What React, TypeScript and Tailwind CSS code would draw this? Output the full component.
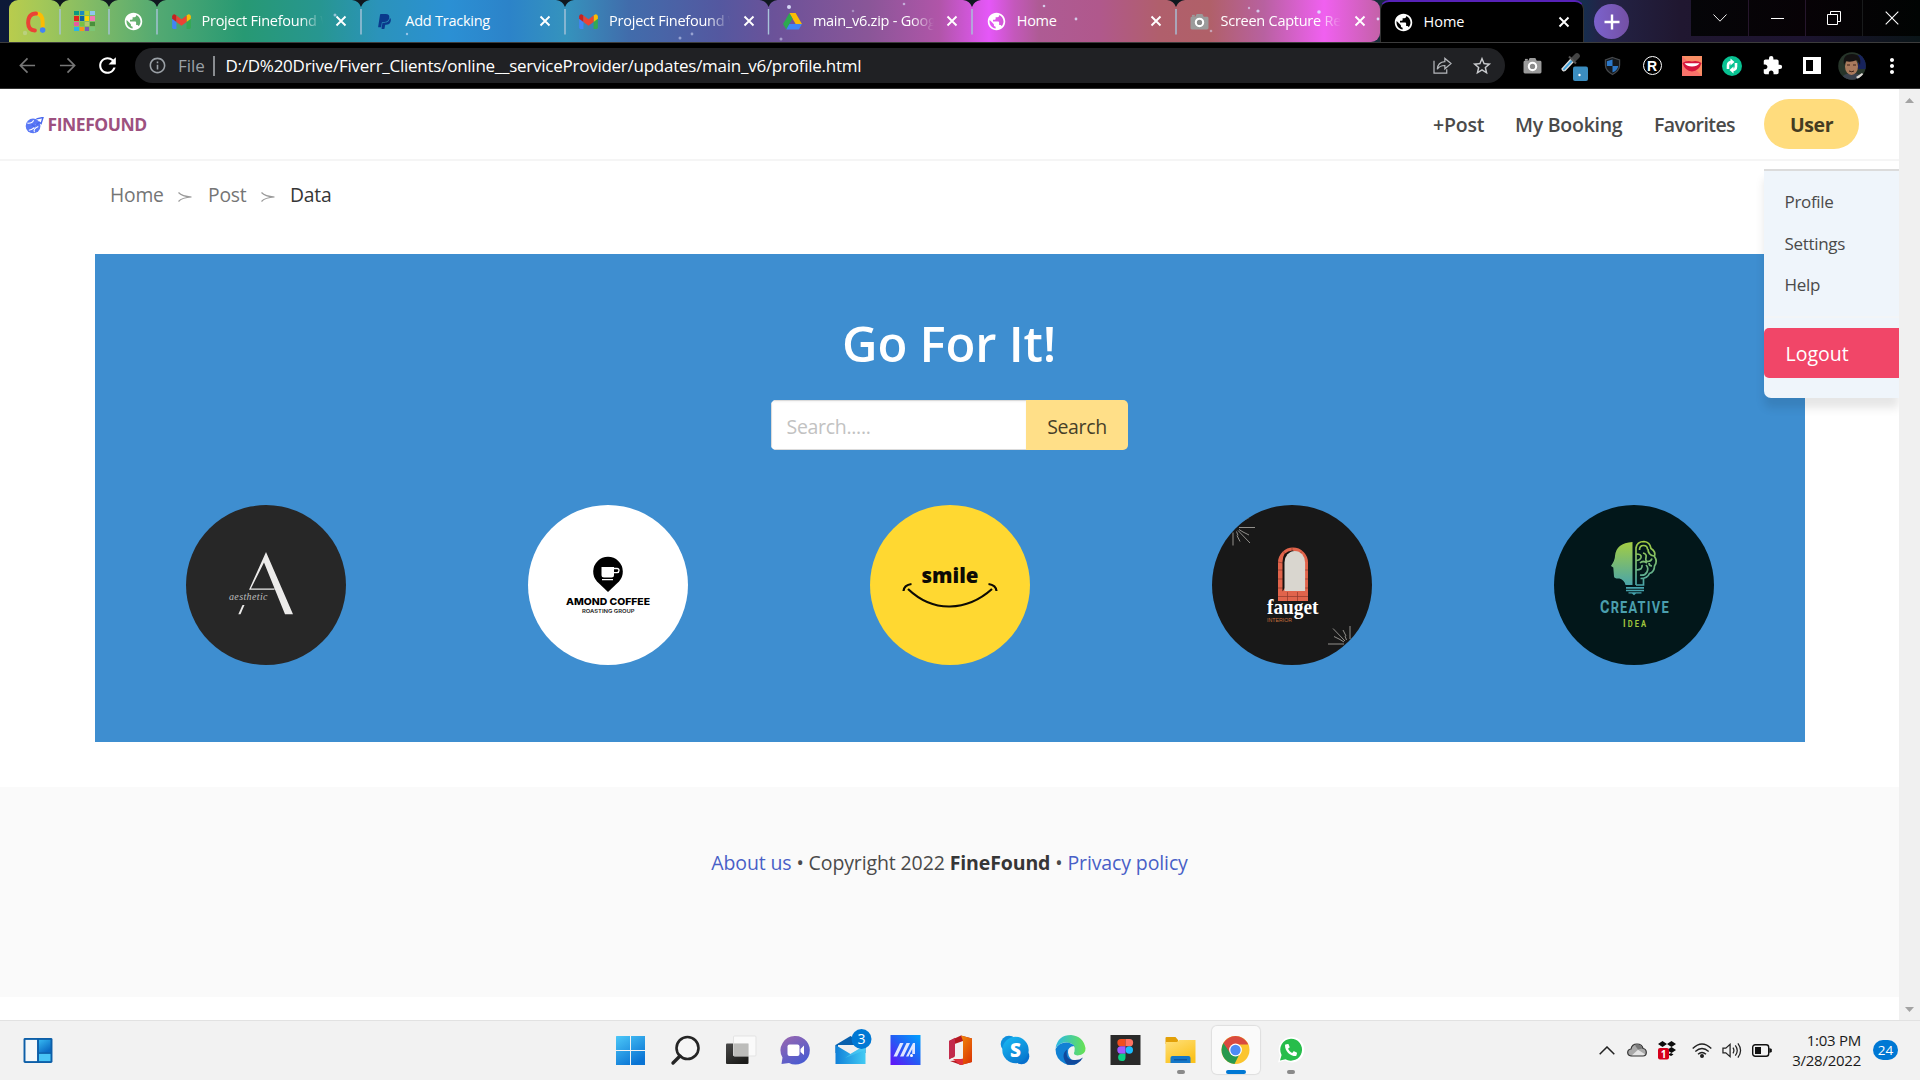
import React from "react";
import { MdPublic, MdExtension, MdOutlineInfo, MdMoreVert, MdStarBorder, MdRefresh } from "react-icons/md";
import { FaPaypal, FaPhone } from "react-icons/fa";

type IconProps = { className?: string };

/* ---------- favicons ---------- */

const Gmail = ({ className = "" }: IconProps) => (
  <svg viewBox="0 0 20 16" className={`h-[15px] w-[19px] ${className}`}>
    <path d="M0 3v11.500Q0 16 1.500 16H4.600V6z" fill="#4285f4" />
    <path d="M20 3v11.500Q20 16 18.500 16h-3.100V6z" fill="#34a853" />
    <path d="M0 2.500Q.5 0 3 .4L4.600 1.500V8.500L0 5z" fill="#c5221f" />
    <path d="M20 2.500Q19.500 0 17 .4L15.400 1.500V8.500L20 5z" fill="#fbbc04" />
    <path d="M4.600 1.500L10 5.600 15.400 1.500v7L10 12.600 4.600 8.500z" fill="#ea4335" />
  </svg>
);

const Drive = () => (
  <svg viewBox="0 0 20 18" className="h-[17px] w-[19px]">
    <path d="M6.700 0h6.600L20 11.700h-6.700z" fill="#fbbc04" />
    <path d="M6.700 0L10 5.800 3.400 17.500 0 11.700z" fill="#2da94f" />
    <path d="M6.700 11.700H20l-3.300 5.900H3.400z" fill="#4285f4" />
  </svg>
);

const Camera = () => (
  <svg viewBox="0 0 20 18" className="h-[17px] w-[19px]">
    <path d="M2 4H5.500L7 1h6l1.500 3H18q1.500 0 1.500 1.500V16q0 1.500-1.500 1.500H2Q.5 17.500.5 16V5.500Q.5 4 2 4z" fill="#9b9b9b" />
    <rect x="2" y="2" width="3" height="2" fill="#9b9b9b" />
    <circle cx="10" cy="10" r="3.900" fill="#8a8a8a" stroke="#fff" strokeWidth="2.200" />
  </svg>
);

const AdsRing = () => (
  <svg viewBox="0 0 22 24" className="h-[24px] w-[21px]">
    <path d="M11.500 3.200q7 0 7 9v5" fill="none" stroke="#fbbc04" strokeWidth="4.200" strokeLinecap="round" />
    <path d="M11.500 3.200Q3.500 3 3.300 13q.2 7.500 7 7.800" fill="none" stroke="#ea4335" strokeWidth="4.200" strokeLinecap="round" />
    <circle cx="18.500" cy="20.500" r="2.900" fill="#4285f4" />
  </svg>
);

const swatches = [
  "#0a9b80", "#1a8ac0", "#b2d235", "#8fc7ee",
  "#e2231a", "#0b5fa5", "#ffd500", "#f277b0",
  "#e85aa0", "#7ac143", "#b5c96a", "#4a8f3c",
  "#29b6e8", "#f7941d", "#7a5ab5", "#7cc576",
];
const SwatchGrid = () => (
  <div className="grid grid-cols-4 gap-px">
    {swatches.map((c, i) => (
      <span key={i} className="size-[4.300px]" style={{ background: c }} />
    ))}
  </div>
);

const Cross = ({ className = "" }: IconProps) => (
  <svg viewBox="0 0 12 12" className={`size-[12px] ${className}`}>
    <path d="M1.500 1.500l9 9M10.500 1.500l-9 9" stroke="#fff" strokeWidth="1.900" />
  </svg>
);

/* ---------- browser chrome ---------- */

const tabs: { icon: React.ReactNode; title: string; fade?: boolean }[] = [
  { icon: <Gmail />, title: "Project Finefound W", fade: true },
  { icon: <FaPaypal className="size-[17px] text-[#0a3a8c]" />, title: "Add Tracking" },
  { icon: <Gmail />, title: "Project Finefound W", fade: true },
  { icon: <Drive />, title: "main_v6.zip - Google", fade: true },
  { icon: <MdPublic className="size-[21px] text-white" />, title: "Home" },
  { icon: <Camera />, title: "Screen Capture Res", fade: true },
];

const Stars = () => (
  <svg viewBox="0 0 1380 42" className="pointer-events-none absolute left-0 top-0 h-[42px] w-[1380px]">
    {[[789, 7, 2, 0.9], [904, 4, 1.300, 0.6], [853, 11, 1.300, 0.4], [680, 38, 1.500, 0.5], [692, 34, 1.400, 0.5], [781, 39, 1.500, 0.5], [1044, 6, 1.300, 0.8], [1076, 19, 1.400, 0.8], [1258, 11, 1.600, 0.8], [1319, 12, 1.800, 0.9], [1249, 8, 1.200, 0.6], [1378, 19, 1.400, 0.9], [335, 15, 1.500, 0.6], [407, 34, 1.200, 0.6], [25, 33, 2.200, 0.25], [1211, 31, 1.300, 0.5]].map(([x, y, r, o], i) => (
      <circle key={i} cx={x} cy={y} r={r} fill="#dfe6ff" opacity={o} />
    ))}
  </svg>
);

const TabStrip = () => (
  <div className="relative flex h-[42px] bg-[linear-gradient(90deg,#0d1a38_0,#0f1826_380px,#101a20_800px,#1f0f38_980px,#182826_1180px,#14304f_1580px,#232448_1600px,#201730_1680px,#1d1430_1800px,#0a1518_1920px)]">
    <div className="flex w-[1380px] pl-[9px]">
      <div className="relative flex w-[1371px] rounded-t-[9px] rounded-br-[9px] bg-[linear-gradient(90deg,#b9cc4d_0,#a5c857_30px,#80ba66_85px,#52a972_150px,#279973_235px,#279690_310px,#2b93bb_370px,#2b90d4_440px,#2c83c9_500px,#3593bd_557px,#416cab_620px,#5458a0_710px,#6b5299_765px,#8a5698_860px,#b055a8_930px,#e557f8_980px,#c458bc_1005px,#ae5b94_1030px,#b0588c_1090px,#b05f6c_1150px,#b06068_1200px,#b861a0_1255px,#f060f0_1315px,#c461a8_1371px)]">
        <div className="flex w-[51px] items-center justify-center pl-px pt-px"><AdsRing /></div>
        <div className="flex w-[49px] items-center justify-center border-l border-transparent pr-px"><SwatchGrid /></div>
        <div className="flex w-[48px] items-center justify-center"><MdPublic className="size-[21px] text-white" /></div>
        {tabs.map((t, i) => (
          <div key={i} className="flex w-[203.800px] items-center">
            <span className="ml-[13px] flex w-[22px] justify-center">{t.icon}</span>
            <span className={`ml-[9.500px] w-[121.500px] overflow-hidden whitespace-nowrap text-[14.500px] leading-5 tracking-[-0.250px] text-white ${t.fade ? "[mask-image:linear-gradient(90deg,#000_98px,transparent_121px)]" : ""}`}>{t.title}</span>
            <Cross className="ml-[12px]" />
          </div>
        ))}
      </div>
    </div>
    <svg viewBox="0 0 1200 42" className="pointer-events-none absolute left-0 top-0 h-[42px] w-[1200px]">
      {[60, 109, 157, 361, 565, 768.500, 972, 1176].map((x) => (
        <g key={x}>
          <path d={`M${x - 9} 0h18q-7 1-9 7q-2-6-9-7z`} fill="#10181f" />
          <path d={`M${x} 9v25.500`} stroke="#a8c4da" strokeWidth="1.400" />
        </g>
      ))}
    </svg>
    <Stars />
    <div className="flex w-[204px] items-center rounded-t-[9px] border-x border-t-2 border-x-[#333] border-t-[#5722b8] bg-black">
      <MdPublic className="ml-[12px] size-[21px] text-white" />
      <span className="ml-[9.500px] w-[121.500px] pb-px text-[14.500px] leading-5 text-white">Home</span>
      <Cross className="ml-[12.500px]" />
    </div>
    <div className="ml-[10px] mt-1 flex size-[35px] items-center justify-center rounded-full bg-[linear-gradient(90deg,#7b62cc,#7450a5)]">
      <svg viewBox="0 0 16 16" className="size-[16px]"><path d="M8 .5v15M.5 8h15" stroke="#fff" strokeWidth="2.400" /></svg>
    </div>
    <div className="ml-auto flex h-[36px] w-[229px] bg-[linear-gradient(90deg,#050508,#070206_50%,#010403)]">
      <div className="flex w-[58px] items-center justify-center border-r border-[#26162c]">
        <svg viewBox="0 0 14 8" className="h-[8px] w-[14px]"><path d="M.5.5L7 7.200 13.500.5" fill="none" stroke="#eee" /></svg>
      </div>
      <div className="flex w-[57px] items-center justify-center border-r border-[#26162c]"><span className="h-px w-[13px] bg-white" /></div>
      <div className="flex w-[57px] items-center justify-center border-r border-[#191b1c]">
        <svg viewBox="0 0 14 14" className="size-[14px]" fill="none" stroke="#fff"><path d="M.5 3.500h10v10H.5zM3.500 3.500V.5h10v10h-3" /></svg>
      </div>
      <div className="flex w-[57px] items-center justify-center">
        <svg viewBox="0 0 14 14" className="size-[14px]"><path d="M.7.7l12.600 12.600M13.300.7L.7 13.300" stroke="#fff" strokeWidth="1.100" /></svg>
      </div>
    </div>
  </div>
);

const Slot = ({ children }: { children: React.ReactNode }) => (
  <span className="relative flex w-10 items-center justify-center">{children}</span>
);

const Toolbar = () => (
  <div className="flex h-[47px] items-center border-t border-[#3c3c3c] bg-black pb-px shadow-[inset_0_-1px_0_#333]">
    <span className="ml-[7px] flex w-10 justify-center">
      <svg viewBox="0 0 18 18" className="size-[17px]" fill="none" stroke="#777" strokeWidth="1.800"><path d="M17 9H2M9 1.500L1.500 9 9 16.500" /></svg>
    </span>
    <span className="flex w-10 justify-center">
      <svg viewBox="0 0 18 18" className="size-[17px]" fill="none" stroke="#777" strokeWidth="1.800"><path d="M1 9h15M9 1.500L16.500 9 9 16.500" /></svg>
    </span>
    <span className="flex w-10 justify-center"><MdRefresh className="size-[25px] text-white" /></span>
    <div className="ml-[8px] flex h-[35px] w-[1370px] items-center rounded-full bg-[#202124] text-[17px] leading-6">
      <MdOutlineInfo className="ml-[13px] size-[19px] text-[#9aa0a6]" />
      <span className="ml-[11px] w-[35px] text-[17px] text-[#9aa0a6]">File</span>
      <span className="h-[20px] w-[1.500px] bg-[#8a8d91]" />
      <span className="ml-[11px] whitespace-nowrap text-[17px] tracking-[-0.255px] text-white">D:/D%20Drive/Fiverr_Clients/online__serviceProvider/updates/main_v6/profile.html</span>
      <svg viewBox="0 0 20 18" className="ml-auto mr-[19px] h-[17px] w-[19px]" fill="none" stroke="#b5b8bc" strokeWidth="1.300">
        <path d="M1 4v13h13.500v-4M4.500 13Q5 5.500 12.500 5V1.500L19 7l-6.500 5.500V9Q7 9 4.500 13z" />
      </svg>
      <MdStarBorder className="mr-[12px] size-[22px] text-[#c8cacd]" />
    </div>
    <div className="ml-[7px] flex h-full items-center">
      <Slot><Camera /></Slot>
      <Slot>
        <svg viewBox="0 0 32 30" className="ml-[4px] mt-[3px] h-[30px] w-[32px] shrink-0">
          <path d="M4 17L13 7l2.500 2.500L7 18.500q-2 1-3-1.500z" fill="#43a5df" stroke="#ddd" strokeWidth="1.300" />
          <path d="M13 6l4-4q2-2 4 0t0 4l-4 4z" fill="#444" /><path d="M11 4.500l7 7" stroke="#555" strokeWidth="2" />
          <rect x="15" y="14.500" width="15" height="14.500" rx="2" fill="#3b8dc0" /><circle cx="21.500" cy="23" r="1.200" fill="#fff" />
        </svg>
      </Slot>
      <Slot>
        <svg viewBox="0 0 18 20" className="h-[20px] w-[17px]">
          <path d="M9 1l7.500 2.500V9q0 6-7.500 10Q1.500 15 1.500 9V3.500z" fill="#15181c" stroke="#46494d" strokeWidth="1.300" />
          <path d="M9 3v7H3V5zM9 10h6q0 4-6 7z" fill="#2c78c9" />
        </svg>
      </Slot>
      <Slot><span className="flex size-[19px] items-center justify-center rounded-full border-[1.500px] border-white font-['Liberation_Sans'] text-[14px] font-bold leading-none text-white">R</span></Slot>
      <Slot>
        <svg viewBox="0 0 20 20" className="size-[20px]">
          <rect width="20" height="20" fill="#f9726a" />
          <path d="M0 0h20v20z" fill="#f9a263" opacity=".6" />
          <path d="M.5 7Q5 4 10 5.500 15 4 19.500 7 17 15 10 15.500 3 15 .5 7z" fill="#d5153c" /><path d="M2.500 7.200h15Q15 10.500 10 10.500T2.500 7.200z" fill="#fff" />
        </svg>
      </Slot>
      <Slot>
        <svg viewBox="0 0 20 20" className="size-[20px]">
          <circle cx="10" cy="10" r="10" fill="#08c292" />
          <g fill="none" stroke="#fff" strokeWidth="2.600"><path d="M6 13V9.500Q6 6 9.500 6M14 7v3.500Q14 14 10.500 14" /></g>
          <path d="M8.500 2.500l4 3.500-4 3.500zM11.500 17.500l-4-3.500 4-3.500z" fill="#fff" />
        </svg>
      </Slot>
      <Slot><MdExtension className="size-[21px] text-white" /></Slot>
      <Slot><span className="h-[17px] w-[18px] border-[3px] border-r-[8px] border-[#fff]" /></Slot>
      <Slot>
        <svg viewBox="0 0 28 28" className="size-[28px]">
          <defs><clipPath id="avatar"><circle cx="14" cy="14" r="13.800" /></clipPath></defs>
          <g clipPath="url(#avatar)">
            <rect width="28" height="28" fill="#27352a" /><path d="M20 3h8v14h-8z" fill="#17235c" />
            <path d="M2 28q3-7 12-7t13 7z" fill="#39404c" /><path d="M18 25l6-4 3 3-6 4z" fill="#dcd8d4" />
            <ellipse cx="13.500" cy="14.500" rx="6.500" ry="8.500" fill="#a97a5d" />
            <path d="M6 13Q4 2 14 2t8 11l-3-5q-7 3-11 1z" fill="#141212" />
            <path d="M9 13h3M15 13h3M11 19q3 1.500 5 0" stroke="#3b2119" fill="none" />
          </g>
        </svg>
      </Slot>
      <Slot><MdMoreVert className="size-[24px] text-white" /></Slot>
    </div>
  </div>
);

/* ---------- page ---------- */

const BrandGlobe = () => (
  <svg viewBox="0 0 20 18" className="h-[17px] w-[19px]">
    <circle cx="8.500" cy="9.500" r="7.800" fill="#5a78f5" />
    <path d="M2.500 6.500q5 .5 6.500-3M4 14q6-1 8-6M10 16q-2-3 4-6" stroke="#fff" strokeWidth="1.100" fill="none" />
    <path d="M12 2l7-1.500-2 6.500-2-1.500-5 5-3-2.500" fill="none" stroke="#4868ee" strokeWidth="1.500" />
  </svg>
);

const UserMenu = () => (
  <div className="absolute right-0 top-[80px] z-10 flex h-[229px] w-[135px] flex-col rounded-bl-[7px] border-t-2 border-[#dbdbdb] bg-[#eff5fb] shadow-[0_10px_10px_rgba(10,10,10,0.1)]">
    <div className="flex flex-col pl-[20.500px] pt-[10px] text-[17px] leading-[42px] tracking-[-0.320px] text-[#4a4a4a]">
      <span className="h-[41.500px]">Profile</span>
      <span className="h-[41.500px]">Settings</span>
      <span className="h-[41.500px]">Help</span>
    </div>
    <div className="mt-[10px] h-[2px] bg-[#f3f5f7]" />
    <div className="mt-[10px] flex h-[50px] items-center rounded-l-[5px] bg-[#f14668] pl-[21.500px] pt-[2px] text-[19.500px] text-white">Logout</div>
  </div>
);

const Header = () => (
  <header className="relative flex h-[72px] items-start border-b-[2px] border-[#f5f5f5] bg-white">
    <div className="ml-[25px] mt-[27px] flex items-center">
      <BrandGlobe />
      <span className="ml-[3.500px] pb-px font-['Open_Sans'] text-[17.500px] font-bold leading-[17px] tracking-[-0.450px] text-[#9d5180]">FINEFOUND</span>
    </div>
    <nav className="ml-auto mr-[40px] mt-[10px] flex h-[50px] items-center whitespace-nowrap text-[19.500px] font-semibold tracking-[-0.400px] text-[#4a4a4a]">
      <span className="w-[82px] pt-[2px] tracking-[-0.200px]">+Post</span>
      <span className="w-[139px] pt-[2px] tracking-[-0.250px]">My Booking</span>
      <span className="w-[110px] pt-[2px] tracking-[-0.600px]">Favorites</span>
      <span className="flex h-[50px] w-[95px] items-center justify-center rounded-full bg-[#ffdc7d] pt-[2px] font-bold text-[#453c22]">User</span>
    </nav>
    <UserMenu />
  </header>
);

const Separator = () => (
  <svg viewBox="0 0 14 10" className="mt-[10px] h-[10px] w-[14px]" fill="none" stroke="#9a9a9a" strokeWidth="1.200">
    <path d="M.5.5Q4 4.500 13.500 5 4 5.500.5 9.500" />
  </svg>
);

const Breadcrumb = () => (
  <div className="flex h-[93px] items-start pl-[110px] pt-[21px] text-[19.300px] leading-[26px] tracking-[-0.220px] text-[#757575]">
    <span className="w-[68px]">Home</span>
    <span className="w-[30px]"><Separator /></span>
    <span className="w-[53px]">Post</span>
    <span className="w-[29px]"><Separator /></span>
    <span className="text-[#363636]">Data</span>
  </div>
);

const Aesthetic = () => (
  <svg viewBox="0 0 160 160" className="size-40 rounded-full bg-[#272727]">
    <path d="M80 47l27 62.200h-8L78 57.500 65 83.500h23.500v1.300H63z" fill="#ecebea" />
    <path d="M56.500 100h2l-4 9.200h-2.200z" fill="#ecebea" />
    <text x="43" y="95" fontFamily="Liberation Serif" fontStyle="italic" fontSize="10" textLength="38.500" fill="#bdbdbd">aesthetic</text>
  </svg>
);
const Coffee = () => (
  <svg viewBox="0 0 160 160" className="size-40 rounded-full bg-white">
    <path d="M80 87L69 76.500A14.800 14.800 0 1 1 91 76.500z" fill="#000" />
    <path d="M73.500 62H86v8q0 2.500-2.500 2.500H76q-2.500 0-2.500-2.500zM74 74h11v1.300H74z" fill="#fff" />
    <path d="M86 63.500h3q2 0 2 2t-2 2.200h-3" fill="none" stroke="#fff" strokeWidth="1.300" />
    <text x="38" y="100" fontFamily="Inter" fontWeight="800" fontSize="9.500" textLength="84" lengthAdjust="spacingAndGlyphs" fill="#000">AMOND COFFEE</text>
    <text x="54" y="108" fontFamily="Inter" fontWeight="600" fontSize="5.300" textLength="52.500" lengthAdjust="spacingAndGlyphs" fill="#222">ROASTING GROUP</text>
  </svg>
);
const Smile = () => (
  <svg viewBox="0 0 160 160" className="size-40 rounded-full bg-[#ffd831]">
    <text x="51.500" y="77.500" fontFamily="Open Sans" fontWeight="800" fontSize="21.500" textLength="57" lengthAdjust="spacingAndGlyphs" fill="#0d0b05">smile</text>
    <g fill="none" stroke="#0d0b05" strokeWidth="2.200"><path d="M38 84Q57 102 80 101.500T122 84" /><path d="M33.500 86q.5-6 8-7M118.500 79q7.500 1 8 7" /></g>
  </svg>
);
const Burst = () => (
  <g stroke="#a09e9a" strokeWidth=".9">
    <path d="M4 0H20M3 3L15 15.500M-2 5V18M8 4.500L14 7.500M2 8L5 14M3-4L14-10M-4 2l-9 12M1.500 4L3 8M4 2L8 4.500" />
  </g>
);
const Fauget = () => (
  <svg viewBox="0 0 160 160" className="size-40 rounded-full bg-[#181818]">
    <g transform="translate(23 22.500)"><Burst /></g>
    <g transform="translate(136 139) rotate(180)"><Burst /></g>
    <path d="M66 96V57.500a15 15 0 0 1 30 0V96z" fill="#e1644b" />
    <path d="M66 65h30M66 74h30M66 83h30M66 91.500h30M75.500 87v9M85.500 87v9M66 57l5 1M80 42.500v5M71 46.500l4 4M90 46.500l-4 4" stroke="#8f3a2c" strokeWidth=".7" />
    <path d="M70.500 86.500V57q0-11 10-11.500 8 1 9 12z" fill="#17110f" />
    <path d="M72.500 86V57.500a10.300 11.500 0 0 1 20.600 0V86z" fill="#d9d6cf" />
    <text x="55" y="109" fontFamily="Liberation Serif" fontWeight="bold" fontSize="21" textLength="51.500" lengthAdjust="spacingAndGlyphs" fill="#fff">fauget</text>
    <text x="55" y="116.500" fontFamily="Liberation Sans" fontSize="6" textLength="25" lengthAdjust="spacingAndGlyphs" fill="#c8703c">INTERIOR</text>
  </svg>
);
const Creative = () => (
  <svg viewBox="0 0 160 160" className="size-40 rounded-full bg-[#02171a]">
    <defs><linearGradient id="idea" gradientUnits="userSpaceOnUse" x1="0" y1="36" x2="0" y2="82"><stop offset="0" stopColor="#a5ce40" /><stop offset="1" stopColor="#46a3ad" /></linearGradient></defs>
    <path d="M78.500 37v43h-7q-1-5-6-6.500-5 .5-5.500-2l-.7-9-2.300-1.500q4-6 4-10Q62 38 78.500 37z" fill="url(#idea)" />
    <g fill="none" stroke="url(#idea)" strokeWidth="1.700">
      <path d="M82 80V43q1-6.500 8-6.500 6 .5 7 7 5 3 3.500 8 3.500 5 0 9.500 0 6-5 7.500-2 5-9 5M89.500 74v6H82" />
      <path d="M85.500 45q0-4.500 4-4.500t4 4M82 49q6 0 5 3.500-1 3-5 3M89 48q4 1 3 4.500-1 4 2 4t4-3M82 65q7 0 6-5M92 60q3 3 1 7-2 4-7 3M94 44q0 6 6 7M98 61q-3 0-3-3M86 58q3-3 7 0" />
    </g>
    <path d="M72 82h18v1.700H72zM72 84.800h18v1.400H72zM74.500 87.300h13v1.300H82l-2 1.700-2-1.700h-3.500z" fill="#46a3ad" />
    <text transform="translate(46 108) scale(.78 1)" fontFamily="Roboto" fontWeight="700" fill="#4b9fae" textLength="88"><tspan fontSize="18.500">C</tspan><tspan fontSize="16.500">REATIVE</tspan></text>
    <text transform="translate(69 122) scale(.8 1)" fontFamily="Roboto" fontWeight="700" fill="#a0c63d" textLength="29"><tspan fontSize="11">I</tspan><tspan fontSize="9.500">DEA</tspan></text>
  </svg>
);

const Hero = () => (
  <section className="ml-[95px] h-[488px] w-[1710px] bg-[#3e8ed0] pt-[59px]">
    <h1 className="pr-[2px] text-center text-[49px] font-semibold leading-[60px] tracking-[-0.200px] text-white">Go For It!</h1>
    <div className="ml-[676px] mt-[27px] flex h-[50px] w-[357px] overflow-hidden rounded-[5px] text-[19.500px]">
      <span className="flex w-[255px] items-center border border-r-0 border-[#dbdbdb] bg-white pl-[14.500px] pt-[4px] tracking-[-0.300px] text-[#c2c2c2] shadow-[inset_0_1px_2px_rgba(10,10,10,0.05)]">Search.....</span>
      <span className="flex w-[102px] items-center justify-center bg-[#ffdf88] pt-[3px] tracking-[-0.350px] text-[#473f28]">Search</span>
    </div>
    <div className="mt-[55px] grid grid-cols-5 justify-items-center">
      <Aesthetic /><Coffee /><Smile /><Fauget /><Creative />
    </div>
  </section>
);

const Footer = () => (
  <footer className="mt-[45px] flex h-[210px] items-start justify-center bg-[#fafafa] pt-[62px] text-[19.500px] leading-[28px] text-[#4a4a4a]">
    <p className="whitespace-nowrap tracking-[-0.120px]">
      <a className="text-[#485fc7]">About us</a> • Copyright 2022 <strong className="font-bold text-[#363636]">FineFound</strong> • <a className="text-[#485fc7]">Privacy policy</a>
    </p>
  </footer>
);

const Scrollbar = () => (
  <div className="flex w-[21px] flex-col items-center justify-between bg-[#f0f0f0] pb-[8px] pt-[9px]">
    <svg viewBox="0 0 9 5" className="h-[5px] w-[9px]"><path d="M0 5L4.500 0 9 5z" fill="#a3a3a3" /></svg>
    <svg viewBox="0 0 9 5" className="h-[5px] w-[9px]"><path d="M0 0h9L4.500 5z" fill="#a3a3a3" /></svg>
  </div>
);

/* ---------- taskbar ---------- */

const grad = (id: string, a: string, b: string, horizontal = false) => (
  <linearGradient id={id} x1="0" y1="0" x2={horizontal ? "1" : "0.600"} y2={horizontal ? "0" : "1"}>
    <stop offset="0" stopColor={a} /><stop offset="1" stopColor={b} />
  </linearGradient>
);

const taskIcons: React.ReactNode[] = [
  <><defs>{grad("win", "#4cc8f8", "#0a74d4")}</defs><path d="M1.500 1h13.500v14h-14V1.500zM16 1h14v14H16zM1 16h14v14H1zM16 16h14v14H16z" fill="url(#win)" /></>,
  <><circle cx="17.500" cy="13" r="11" fill="#f5f5f5" stroke="#252525" strokeWidth="2.600" /><path d="M10 21L3 28" stroke="#252525" strokeWidth="3.400" strokeLinecap="round" /></>,
  <><defs>{grad("tv", "#4a4a4a", "#1c1c1a")}</defs><rect x="1" y="8.500" width="22.500" height="20.500" rx="1" fill="url(#tv)" /><rect x="8.500" y="1" width="22.500" height="20" rx="1" fill="#fbfbfb" fillOpacity=".9" stroke="#e3e3e3" /><rect x="8.500" y="8.500" width="15" height="12.500" fill="#bcbcba" /></>,
  <><defs>{grad("chat", "#9d68ae", "#4b5bd0")}</defs><path d="M15.500 1A14.300 14.300 0 1 1 9 28L1.500 29l1-6.500A14.300 14.300 0 0 1 15.500 1z" fill="url(#chat)" /><rect x="7.500" y="9.500" width="12" height="11.500" rx="2" fill="#fff" /><path d="M20.500 14l3.500-3.500v9.500L20.500 17z" fill="#fff" /></>,
  <><defs>{grad("mail", "#1080d8", "#43cbf4", true)}</defs><path d="M.5 10L15.500 1l15 9v8H.5z" fill="#0860ad" /><path d="M3 10h25v12H3z" fill="#f0f0f0" /><path d="M.5 10l15 9 15-9v19H.5z" fill="url(#mail)" /><path d="M15.500 19l15-9v5L10 23z" fill="#50d0f6" opacity=".5" /><circle cx="26.500" cy="4" r="10" fill="#0078d4" /><text x="26.500" y="9" textAnchor="middle" fontFamily="Open Sans" fontSize="14" fill="#fff">3</text></>,
  <><defs><linearGradient id="ma" x1="0" y1="1" x2="1" y2="0"><stop offset="0" stopColor="#6510f8" /><stop offset=".5" stopColor="#245cf4" /><stop offset="1" stopColor="#00a2ff" /></linearGradient></defs><path d="M.5 0h30v30H.5z" fill="url(#ma)" /><path d="M3.500 21.500L10 8h3.500L7 21.500zM10 21.500L16.500 8H20l-6.500 13.500zM16 21.500L23 8h2v11h-2.800V14L18.500 21.500z" fill="#dfe6ff" /><circle cx="21.500" cy="20.500" r="1.500" fill="#fff" /></>,
  <><defs>{grad("of", "#f18a0a", "#dc3c05")}</defs><path d="M16 .5l11 3v23.500l-11 3L5 26l13-1V6L9.500 9v13L4 24V6z" fill="#b51a22" /><path d="M16 .5l11 3v23.500l-11 3V24l2-.5V6z" fill="url(#of)" /><path d="M4 24.500V6l6-3.300v18z" fill="#c22b4c" /><path d="M8 24h10v5.500l-3 .5z" fill="#e0303d" /></>,
  <><defs>{grad("sk", "#1abcf5", "#0879cf")}</defs><circle cx="9" cy="9" r="8.300" fill="#0f8fdc" /><circle cx="21.500" cy="21.500" r="7.800" fill="#0870cd" /><circle cx="15.500" cy="15" r="13.200" fill="url(#sk)" /><text x="15.500" y="22" textAnchor="middle" fontFamily="Open Sans" fontWeight="800" fontSize="19" fill="#fff">S</text></>,
  <><defs>{grad("ed", "#29b8e8", "#67e250", true)}</defs><path d="M.5 13Q3 0 16 0q12 1 14.500 13 .5 7-8 7.500-5-.5-3-4Q21 8 12 7.500 5 7 .5 13z" fill="url(#ed)" /><path d="M.5 14q3-6.500 11-6.500 5 0 8 3.500-7 .5-6.500 6.500.5 7 9.500 11-6 3-13 0Q.5 24 .5 14z" fill="#1181d4" /><path d="M12 14.500Q10 25 19 25q5 .5 9-2.500-5 9-16 7Q5 20 12 14.500z" fill="#10499c" /></>,
  <><path d="M.5 0h30v30H.5z" fill="#2a2a2a" /><path d="M15.500 4v7.300H11a3.650 3.650 0 0 1 0-7.300z" fill="#f24e1e" /><path d="M15.500 4h4a3.650 3.650 0 0 1 0 7.300h-4z" fill="#ff7262" /><path d="M15.500 11.300v7.400H11a3.700 3.700 0 0 1 0-7.400z" fill="#a259ff" /><circle cx="19.300" cy="15" r="3.700" fill="#1abcfe" /><path d="M15.500 18.700v3.700A3.700 3.700 0 1 1 11.500 18.700z" fill="#0acf83" /></>,
  <><defs>{grad("fo", "#ffe07a", "#fbc21c")}</defs><path d="M.5 3q0-1 1-1h9l2.500 3v4H.5z" fill="#e2a008" /><path d="M.5 7H12l2-2h16.500v23H.5z" fill="url(#fo)" /><path d="M5.500 28v-5q0-2 2-2h16q2 0 2 2v5z" fill="#1477c8" /><path d="M9 24.800h13" stroke="#0a4b90" /></>,
  <><circle cx="15.500" cy="15" r="14" fill="#fbc52f" /><path d="M3.400 8A14 14 0 0 1 27.600 8L28 9.500H15.500L9 19z" fill="#d94a3f" /><path d="M3.400 8l7 10.500Q13 21 19 20L14.500 29A14 14 0 0 1 3.400 8z" fill="#27994e" /><circle cx="15.500" cy="15" r="6.400" fill="#fff" /><circle cx="15.500" cy="15" r="5.200" fill="#4c8bf5" /></>,
  <><path d="M16 2a12.700 12.700 0 1 1-6 23.500L3 27.500l2-7A12.700 12.700 0 0 1 16 2z" fill="#fff" /><path d="M16 3.700a11 11 0 1 1-5.500 20.500L5 25.500 6.600 20A11 11 0 0 1 16 3.700z" fill="#27bd4b" /></>,
];

const Taskbar = () => (
  <div className="flex h-[60px] items-stretch border-t border-[#e2e2e2] bg-[#f2f2f2]">
    <div className="flex w-[603px] items-center pl-[22px]">
      <svg viewBox="0 0 32 28" className="h-[27px] w-[32px]">
        <defs>{grad("wd", "#35b7f1", "#0b6bc4")}</defs>
        <rect x="1" y="1" width="30" height="26" rx="1.500" fill="#0d5fa8" /><rect x="3" y="3" width="12" height="22" fill="#f5f8fa" />
        <rect x="17" y="3" width="12" height="13" fill="url(#wd)" /><rect x="17" y="17.500" width="12" height="7.500" fill="#49c5f6" />
      </svg>
    </div>
    <div className="flex">
      {taskIcons.map((icon, i) => (
        <div key={i} className="relative flex w-[55px] justify-center">
          <div className={i === 11 ? "mt-[5px] flex h-[48px] w-[48px] justify-center rounded-[5px] bg-[#fafafa] pt-[9px] shadow-[0_0_1px_1px_rgba(0,0,0,0.08)]" : "flex pt-[14px]"}>
            <svg viewBox="0 0 31 30" className="h-[30px] w-[31px] overflow-visible">{icon}</svg>
          </div>
          {i === 12 && <FaPhone className="absolute left-[22px] top-[23px] size-[12px] -scale-x-100 text-white" />}
          {i === 11 && <span className="absolute bottom-[6px] h-[4px] w-[20px] rounded-full bg-[#0078d4]" />}
          {(i === 10 || i === 12) && <span className="absolute bottom-[6px] h-[4px] w-[8px] rounded-full bg-[#8a8a8a]" />}
        </div>
      ))}
    </div>
    <div className="ml-auto flex items-center pb-px">
      <svg viewBox="0 0 16 9" className="mr-[12px] h-[9px] w-[16px]"><path d="M.7 8.300L8 1l7.300 7.300" fill="none" stroke="#222" strokeWidth="1.500" /></svg>
      <svg viewBox="0 0 20 14" className="mr-[10px] h-[14px] w-[20px]"><path d="M4 13Q.7 12.500.7 9.500T4 6q1-5 6-5t6 4.500q3.300.5 3.300 4T16 13z" fill="#a9a9a9" stroke="#333" strokeWidth="1.200" /><path d="M5 12.300l6-5.500 7 4.500-1.500 1z" fill="#e4e4e4" /><path d="M8 2.500q5-3 7.500 3L11 6.500z" fill="#777" /></svg>
      <svg viewBox="0 0 20 20" className="mr-[15px] size-[20px]"><path d="M1 4l4.500-3L10 4 5.500 7zM10 4l4.500-3L19 4l-4.500 3zM10 10l4.500-3L19 10l-4.500 3zM11 14.500l3-1.500 2.500 1.500-2.500 1.500z" fill="#0c0c0c" /><rect x="1" y="8" width="11" height="11.500" rx="2" fill="#d6001c" /><text x="6.500" y="17.500" textAnchor="middle" fontFamily="Open Sans" fontWeight="700" fontSize="10" fill="#fff">1</text></svg>
      <svg viewBox="0 0 20 15" className="mr-[10px] h-[15px] w-[20px]" fill="none" stroke="#222" strokeWidth="1.400"><path d="M.7 5.500Q10-3.500 19.300 5.500M3.300 8.500q6.700-6 13.400 0M6 11.200q4-3.500 8 0" /><circle cx="10" cy="13" r="1.300" fill="#222" /></svg>
      <svg viewBox="0 0 21 17" className="mr-[10px] h-[17px] w-[20px]" fill="none" stroke="#222" strokeWidth="1.300"><path d="M1 6h3l4.500-4v13L4 11H1zM11.500 5.500q2 3 0 6M14 3q4 5.500 0 11M16.700 1q5.600 7.500 0 15" /></svg>
      <svg viewBox="0 0 20 13" className="mr-[19px] h-[13px] w-[20px]"><rect x=".7" y=".7" width="16" height="11.600" rx="2.500" fill="none" stroke="#111" strokeWidth="1.400" /><rect x="3" y="3" width="6" height="7" fill="#111" /><path d="M17.300 4l2.500 1v3l-2.500 1z" fill="#111" /></svg>
      <div className="w-[70px] text-right text-[15px] leading-[20px] tracking-[-0.250px] text-[#1a1a1a]"><div className="whitespace-nowrap">1:03 PM</div><div className="flex justify-end whitespace-nowrap">3/28/2022</div></div>
      <span className="ml-[12px] mr-[22px] flex h-[20px] w-[25px] items-center justify-center rounded-full bg-[#0078d4] pt-px text-[13.500px] leading-none text-white">24</span>
    </div>
  </div>
);

export default function App() {
  return (
    <div className="flex h-[1080px] w-[1920px] flex-col overflow-hidden bg-white font-['Open_Sans','Noto_Sans',sans-serif]">
      <TabStrip />
      <Toolbar />
      <div className="flex h-[931px]">
        <main className="w-[1899px] overflow-hidden">
          <Header />
          <Breadcrumb />
          <Hero />
          <Footer />
        </main>
        <Scrollbar />
      </div>
      <Taskbar />
    </div>
  );
}
